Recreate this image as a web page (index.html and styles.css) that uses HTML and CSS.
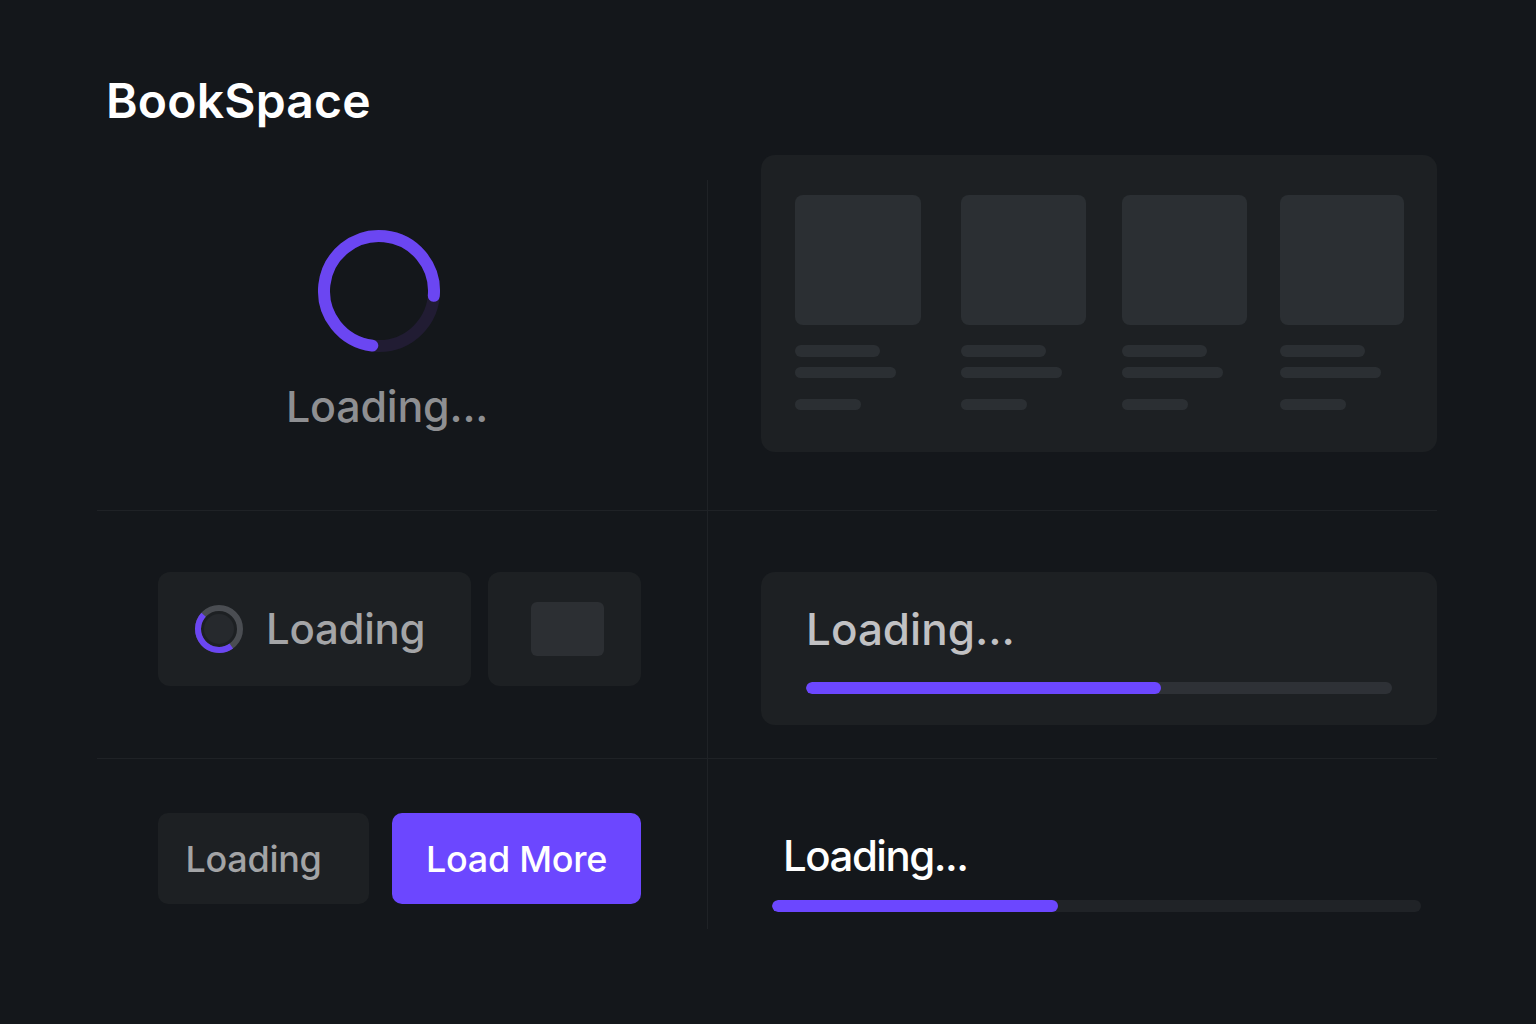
FILE: index.html
```html
<!DOCTYPE html>
<html lang="en">
<head>
<meta charset="utf-8">
<title>BookSpace – Loading states</title>
<link rel="stylesheet" href="styles.css">
</head>
<body>
<div class="page">
  <h1 class="brand">BookSpace</h1>
  <div class="board">
    <div class="cell cell-spinner">
      <svg class="spinner" width="124" height="124" viewBox="0 0 124 124">
        <circle cx="62" cy="62" r="55" fill="none" stroke="#211c33" stroke-width="12"/>
        <path d="M55.3 116.6 A55 55 0 1 1 116.8 66.8" fill="none" stroke="#6b46f2" stroke-width="12" stroke-linecap="round"/>
      </svg>
      <div class="big-label">Loading...</div>
    </div>
    <div class="cell cell-right cell-skeleton">
      <div class="skeleton-card">
        <div class="sk-item">
          <div class="sk-cover"></div>
          <div class="sk-line l1"></div>
          <div class="sk-line l2"></div>
          <div class="sk-line l3"></div>
        </div>
        <div class="sk-item">
          <div class="sk-cover"></div>
          <div class="sk-line l1"></div>
          <div class="sk-line l2"></div>
          <div class="sk-line l3"></div>
        </div>
        <div class="sk-item">
          <div class="sk-cover"></div>
          <div class="sk-line l1"></div>
          <div class="sk-line l2"></div>
          <div class="sk-line l3"></div>
        </div>
        <div class="sk-item">
          <div class="sk-cover"></div>
          <div class="sk-line l1"></div>
          <div class="sk-line l2"></div>
          <div class="sk-line l3"></div>
        </div>
      </div>
    </div>

    <div class="cell cell-buttons">
      <div class="btn-loading">
        <svg class="mini-spinner" width="50" height="50" viewBox="0 0 50 50">
          <circle cx="25" cy="25" r="15" fill="#26292d"/>
          <circle cx="25" cy="25" r="21" fill="none" stroke="#4a4d52" stroke-width="6"/>
          <path d="M37.3 42 A21 21 0 0 1 9.6 10.7" fill="none" stroke="#6b46f2" stroke-width="6"/>
        </svg>
        <span class="btn-loading-text">Loading</span>
      </div>
      <div class="btn-square">
        <div class="btn-square-inner"></div>
      </div>
    </div>
    <div class="cell cell-right cell-progress">
      <div class="progress-card">
        <div class="progress-title">Loading...</div>
        <div class="track"><div class="fill" style="width:60.6%"></div></div>
      </div>
    </div>

    <div class="cell cell-actions">
      <button class="btn btn-ghost">Loading</button>
      <button class="btn btn-primary">Load More</button>
    </div>
    <div class="cell cell-right cell-inline">
      <div class="inline-title">Loading...</div>
      <div class="track track-dark"><div class="fill" style="width:44%"></div></div>
    </div>
  </div>
</div>
</body>
</html>
```
FILE: styles.css
```css
* { box-sizing: border-box; }

html, body {
  margin: 0;
  background: #14171b;
}

body {
  font-family: "Inter", "Noto Sans", sans-serif;
  color: #ffffff;
  width: 1536px;
  height: 1024px;
  overflow: hidden;
}

.page {
  padding: 73px 99px 0 97px;
}

.brand {
  margin: 0 0 26px 9px;
  font-size: 48px;
  line-height: 56px;
  font-weight: 600;
  letter-spacing: 0.2px;
  color: #ffffff;
}

.board {
  display: grid;
  grid-template-columns: 610px 730px;
  grid-template-rows: 356px 248px 170px;
}

.cell {
  border-bottom: 1px solid #1f2226;
}

.cell:nth-last-child(-n+2) {
  border-bottom: none;
}

.cell-right {
  border-left: 1px solid #1f2226;
  padding-left: 53px;
}

.cell-right.cell-skeleton {
  border-left: none;
  padding-left: 54px;
  background: linear-gradient(#1f2226, #1f2226) no-repeat 0 25px / 1px calc(100% - 25px);
}

/* Row 1 left: spinner */
.cell-spinner {
  display: flex;
  flex-direction: column;
  align-items: center;
  padding: 74px 30px 0 0;
}

.spinner {
  display: block;
  margin-right: 16px;
}

.big-label {
  margin-top: 27px;
  font-size: 43px;
  line-height: 52px;
  font-weight: 500;
  color: #8e8f92;
  letter-spacing: -0.2px;
}

/* Row 1 right: skeleton grid */
.skeleton-card {
  width: 676px;
  height: 297px;
  background: #1d2023;
  border-radius: 14px;
  padding: 40px 32px 0 34px;
  display: flex;
  align-items: flex-start;
}

.sk-item { width: 126px; flex: none; }
.sk-item:nth-child(2) { width: 125px; margin-left: 40px; }
.sk-item:nth-child(3) { width: 125px; margin-left: 36px; }
.sk-item:nth-child(4) { width: 124px; margin-left: 33px; }

.sk-cover {
  height: 130px;
  background: #2b2f33;
  border-radius: 8px;
}

.sk-line {
  background: #2b2f33;
  border-radius: 6px;
}

.sk-line.l1 { width: 85px; height: 12px; margin-top: 20px; }
.sk-line.l2 { width: 101px; height: 11px; margin-top: 10px; }
.sk-line.l3 { width: 66px; height: 11px; margin-top: 21px; }

/* Row 2 left */
.cell-buttons {
  display: flex;
  align-items: flex-start;
  gap: 17px;
  padding: 61px 0 0 61px;
}

.btn-loading {
  width: 313px;
  height: 114px;
  background: #1d2023;
  border-radius: 12px;
  display: flex;
  align-items: center;
  padding-left: 36px;
  gap: 22px;
}

.mini-spinner { display: block; flex: none; }

.btn-loading-text {
  font-size: 42px;
  line-height: 50px;
  font-weight: 500;
  color: #a4a5a7;
  letter-spacing: -0.3px;
}

.btn-square {
  width: 153px;
  height: 114px;
  background: #1d2023;
  border-radius: 12px;
  display: flex;
  align-items: center;
  justify-content: center;
  padding-left: 6px;
}

.btn-square-inner {
  width: 73px;
  height: 54px;
  background: #2c2f33;
  border-radius: 6px;
}

/* Row 2 right */
.cell-progress {
  padding-top: 61px;
}

.progress-card {
  width: 676px;
  height: 153px;
  background: #1d2023;
  border-radius: 14px;
  padding: 30px 45px 0 45px;
}

.progress-title {
  font-size: 44px;
  line-height: 54px;
  font-weight: 500;
  color: #c1c1c3;
  letter-spacing: 0;
}

.track {
  margin-top: 26px;
  height: 12px;
  border-radius: 6px;
  background: #2e3136;
  overflow: hidden;
}

.fill {
  height: 100%;
  background: #6c47ff;
  border-radius: 6px;
}

/* Row 3 left */
.cell-actions {
  display: flex;
  align-items: flex-start;
  gap: 23px;
  padding: 54px 0 0 61px;
}

.btn {
  height: 91px;
  border: none;
  border-radius: 10px;
  font-family: "Inter", "Noto Sans", sans-serif;
  font-size: 36px;
  font-weight: 500;
  letter-spacing: -0.3px;
  padding: 0;
}

.btn-ghost {
  width: 211px;
  background: #1d2023;
  color: #a3a4a6;
  padding-right: 20px;
}

.btn-primary {
  width: 249px;
  background: #6c47ff;
  color: #ffffff;
}

/* Row 3 right */
.cell-inline {
  padding: 73px 16px 0 64px;
}

.inline-title {
  margin-left: 11px;
  font-size: 42px;
  line-height: 48px;
  font-weight: 500;
  color: #ffffff;
  letter-spacing: -1.5px;
}

.track-dark {
  margin-top: 20px;
  width: 649px;
  background: #202327;
}
```
